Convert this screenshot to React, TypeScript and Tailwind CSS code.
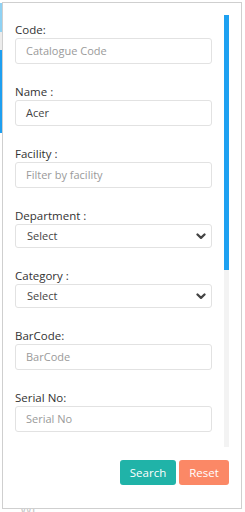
import { ReactNode } from "react";

type Field = {
  label: string;
  kind: "input" | "select";
  value?: string;
  placeholder?: string;
};

const fields: Field[] = [
  { label: "Code:", kind: "input", placeholder: "Catalogue Code" },
  { label: "Name :", kind: "input", value: "Acer" },
  { label: "Facility :", kind: "input", placeholder: "Filter by facility" },
  { label: "Department :", kind: "select", value: "Select" },
  { label: "Category :", kind: "select", value: "Select" },
  { label: "BarCode:", kind: "input", placeholder: "BarCode" },
  { label: "Serial No:", kind: "input", placeholder: "Serial No" },
];

const Chevron = () => (
  <svg width="10" height="7" viewBox="0 0 10 7" className="shrink-0">
    <path d="M1.5 1.5 L5 4.8 L8.5 1.5" fill="none" stroke="#444" strokeWidth="2.3" strokeLinecap="round" strokeLinejoin="round" />
  </svg>
);

const FieldBox = ({ field }: { field: Field }): ReactNode => {
  if (field.kind === "select") {
    return (
      <div className="flex h-[24px] items-center justify-between rounded-[3px] border border-[#e2e2e2] bg-white pl-[11px] pr-[5px] text-[11px] text-[#444]">
        <span>{field.value}</span>
        <Chevron />
      </div>
    );
  }

  return (
    <div className="flex h-[26px] items-center rounded-[3px] border border-[#e2e2e2] bg-white pl-[10px] text-[11px]">
      {field.value ? (
        <span className="text-[#444]">{field.value}</span>
      ) : (
        <span className="text-[#9a9a9a]">{field.placeholder}</span>
      )}
    </div>
  );
};

const App = () => {
  return (
    <div
      className="relative h-[512px] w-[245px] overflow-hidden bg-white"
      style={{ fontFamily: '"Open Sans", "Liberation Sans", sans-serif' }}
    >
      {/* bits of the page under the popup */}
      <div className="absolute left-0 top-0 flex w-[2px] flex-col">
        <div className="h-[3px] bg-white" />
        <div className="h-[29px] bg-[#8fd2f4]" />
        <div className="h-[18px] bg-[#ececec]" />
        <div className="h-[83px] bg-[#1e9ff0]" />
      </div>
      <div className="absolute left-[20px] top-[503px] text-[13px] leading-none text-[#c4c4c4]">
        Wi
      </div>

      <div className="absolute left-[2px] top-[2px] flex h-[507px] w-[240px] flex-col border border-[#cfcfcf] bg-white pr-[12px] pt-[12px]">
        <div className="flex h-[432px]">
          <div className="flex-1 overflow-hidden px-[12px] pt-[6px]">
            {fields.map((field) => (
              <div key={field.label} className="mb-[19px]">
                <div className="h-[17px] text-[11.5px] leading-[17px] text-[#333]">{field.label}</div>
                <FieldBox field={field} />
              </div>
            ))}
          </div>
          <div className="w-[5px] bg-[#f3f3f3]">
            <div className="h-[255px] bg-[#1ea1f1]" />
          </div>
        </div>

        <div className="mt-[13px] flex justify-end gap-[3px]">
          <button
            type="button"
            className="h-[25px] w-[56px] rounded-[3px] bg-[#20b3a8] text-[11.5px] text-white"
          >
            Search
          </button>
          <button
            type="button"
            className="h-[25px] w-[50px] rounded-[3px] bg-[#fb8866] text-[11.5px] text-white"
          >
            Reset
          </button>
        </div>
      </div>
    </div>
  );
};

export default App;
